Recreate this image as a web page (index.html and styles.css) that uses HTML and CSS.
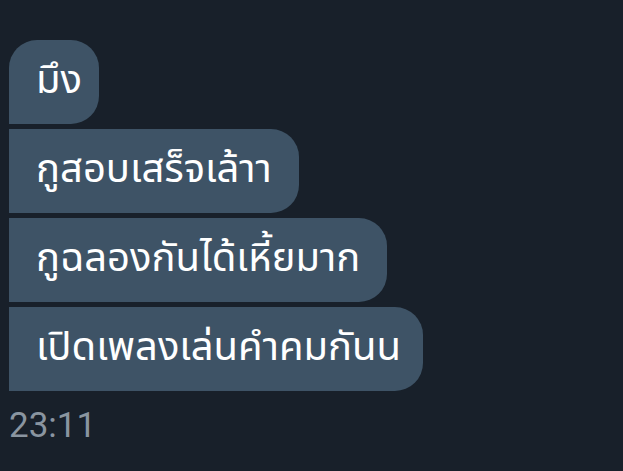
FILE: index.html
```html
<!DOCTYPE html>
<html lang="th">
<head>
<meta charset="utf-8">
<link rel="stylesheet" href="styles.css">
</head>
<body>
<div class="chat">
  <div class="group">
    <div class="bubble first">มึง</div>
    <div class="bubble">กูสอบเสร็จเล้าา</div>
    <div class="bubble">กูฉลองกันได้เหี้ยมาก</div>
    <div class="bubble last">เปิดเพลงเล่นคำคมกันน</div>
  </div>
  <div class="time">23:11</div>
</div>
</body>
</html>
```
FILE: styles.css
```css
html, body {
  margin: 0;
  padding: 0;
  background: #18202a;
}
.chat {
  padding: 40px 0 0 9px;
}
.group {
  display: flex;
  flex-direction: column;
  align-items: flex-start;
  gap: 5px;
}
.bubble {
  height: 84px;
  box-sizing: border-box;
  padding: 0 27px 2px;
  display: flex;
  align-items: center;
  background: #3e5366;
  color: #ffffff;
  font-family: "Noto Sans Thai", "Noto Sans", sans-serif;
  font-size: 40px;
  border-radius: 0 28px 28px 0;
}
.bubble.first {
  padding: 0 17px 2px 27px;
  border-radius: 28px 28px 28px 0;
}
.bubble.last {
  padding-right: 22px;
}
.time {
  margin: 16px 0 0 0;
  font-family: Roboto, sans-serif;
  font-size: 35px;
  line-height: 38px;
  color: #8a95a0;
}
```
